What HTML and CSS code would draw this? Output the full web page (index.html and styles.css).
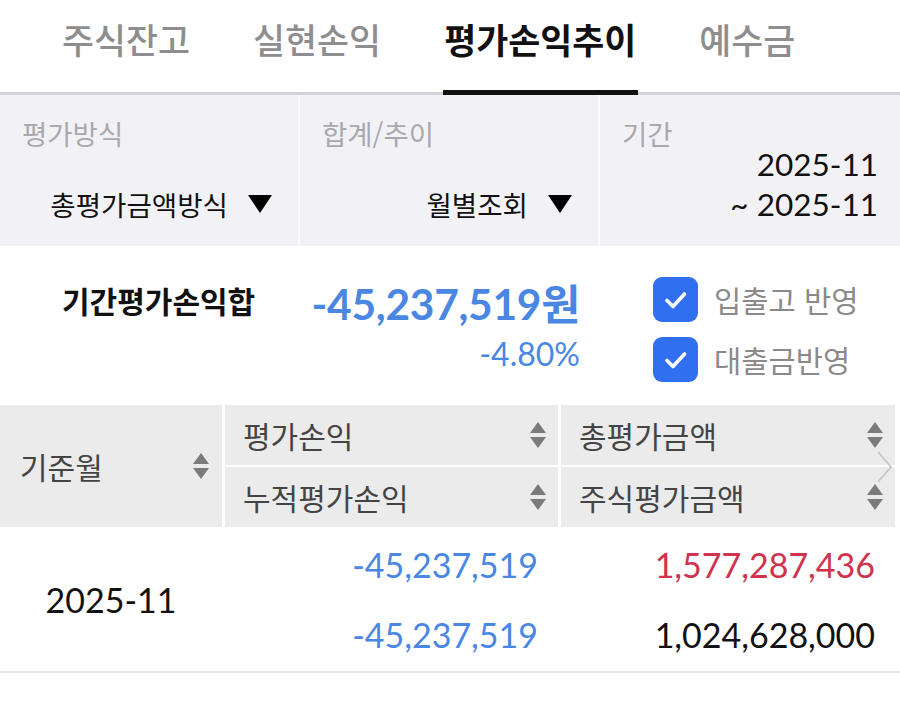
FILE: index.html
```html
<!DOCTYPE html>
<html lang="ko">
<head>
<meta charset="utf-8">
<title>평가손익추이</title>
<link rel="stylesheet" href="styles.css">
</head>
<body>
<div class="page">
  <nav class="tabs">
    <div class="tab">주식잔고</div>
    <div class="tab">실현손익</div>
    <div class="tab active">평가손익추이</div>
    <div class="tab">예수금</div>
  </nav>

  <section class="filters">
    <div class="fcol">
      <div class="flabel">평가방식</div>
      <div class="fvalue">총평가금액방식 <svg class="caret" width="24" height="18" viewBox="0 0 24 18"><path d="M0 0 H24 L12 18 Z" fill="#000"/></svg></div>
    </div>
    <div class="fcol">
      <div class="flabel">합계/추이</div>
      <div class="fvalue">월별조회 <svg class="caret" width="24" height="18" viewBox="0 0 24 18"><path d="M0 0 H24 L12 18 Z" fill="#000"/></svg></div>
    </div>
    <div class="fcol period">
      <div class="flabel">기간</div>
      <div class="pvalues">
        <div class="pline num">2025-11</div>
        <div class="pline num">~ 2025-11</div>
      </div>
    </div>
  </section>

  <section class="summary">
    <div class="sum-label">기간평가손익합</div>
    <div class="sum-values">
      <div class="sum-amount"><span class="num">-45,237,519</span>원</div>
      <div class="sum-rate num">-4.80%</div>
    </div>
    <div class="checks">
      <label class="check"><span class="box"><svg width="45" height="45" viewBox="0 0 45 45"><path d="M14 23.5 L20 29.5 L31.5 17" fill="none" stroke="#fff" stroke-width="3.6" stroke-linecap="round" stroke-linejoin="round"/></svg></span><span class="check-text">입출고 반영</span></label>
      <label class="check"><span class="box"><svg width="45" height="45" viewBox="0 0 45 45"><path d="M14 23.5 L20 29.5 L31.5 17" fill="none" stroke="#fff" stroke-width="3.6" stroke-linecap="round" stroke-linejoin="round"/></svg></span><span class="check-text">대출금반영</span></label>
    </div>
  </section>

  <section class="grid">
    <div class="thead">
      <div class="th th-month">
        <span>기준월</span>
        <svg class="sort" width="18" height="28" viewBox="0 0 18 28"><path d="M9 1 L17 12 H1 Z M1 16 H17 L9 27 Z" fill="#7b7b7b"/></svg>
      </div>
      <div class="th">
        <span>평가손익</span>
        <svg class="sort" width="18" height="28" viewBox="0 0 18 28"><path d="M9 1 L17 12 H1 Z M1 16 H17 L9 27 Z" fill="#7b7b7b"/></svg>
      </div>
      <div class="th">
        <span>총평가금액</span>
        <svg class="sort" width="18" height="28" viewBox="0 0 18 28"><path d="M9 1 L17 12 H1 Z M1 16 H17 L9 27 Z" fill="#7b7b7b"/></svg>
      </div>
      <div class="th">
        <span>누적평가손익</span>
        <svg class="sort" width="18" height="28" viewBox="0 0 18 28"><path d="M9 1 L17 12 H1 Z M1 16 H17 L9 27 Z" fill="#7b7b7b"/></svg>
      </div>
      <div class="th">
        <span>주식평가금액</span>
        <svg class="sort" width="18" height="28" viewBox="0 0 18 28"><path d="M9 1 L17 12 H1 Z M1 16 H17 L9 27 Z" fill="#7b7b7b"/></svg>
      </div>
      <svg class="chevron" width="16" height="32" viewBox="0 0 16 32"><path d="M1 1 L14 16 L1 31" fill="none" stroke="#c4c4c4" stroke-width="1.6"/></svg>
    </div>
    <div class="tbody">
      <div class="td td-month num">2025-11</div>
      <div class="td num blue">-45,237,519</div>
      <div class="td num red">1,577,287,436</div>
      <div class="td num blue">-45,237,519</div>
      <div class="td num">1,024,628,000</div>
    </div>
  </section>
</div>
</body>
</html>
```

FILE: styles.css
```css
* { box-sizing: border-box; }

html, body {
  margin: 0;
  padding: 0;
  background: #fff;
}

body {
  font-family: "Noto Sans CJK KR", "Noto Sans", sans-serif;
  color: #111;
  width: 900px;
  height: 704px;
  overflow: hidden;
}

.num {
  font-family: "Lato", "Noto Sans CJK KR", sans-serif;
}

/* Tabs */
.tabs {
  display: flex;
  gap: 63px;
  padding-left: 62px;
  height: 95px;
  border-bottom: 3px solid #d2d2d7;
}

.tab {
  position: relative;
  font-size: 34.8px;
  line-height: 78px;
  color: #8e8e8e;
  font-weight: 500;
  white-space: nowrap;
}

.tab.active {
  color: #111;
  font-weight: 700;
}

.tab.active::after {
  content: "";
  position: absolute;
  left: -1px;
  right: -2px;
  bottom: -3px;
  height: 5px;
  background: #111;
}

/* Filters */
.filters {
  display: grid;
  grid-template-columns: 298px 298px 1fr;
  column-gap: 2px;
  height: 151px;
  background: #fbfbfc;
}

.fcol {
  background: #f2f2f6;
  padding: 22px 26px 0 22px;
  display: flex;
  flex-direction: column;
}

.flabel {
  font-size: 27.5px;
  line-height: 32px;
  color: #a9a9ad;
  white-space: nowrap;
}

.fvalue {
  margin-top: 37px;
  font-size: 27.6px;
  line-height: 36px;
  color: #111;
  display: flex;
  align-items: center;
  justify-content: flex-end;
  gap: 20px;
  white-space: nowrap;
}

.caret {
  display: block;
  flex: none;
}

.period {
  padding-right: 22px;
}

.pvalues {
  display: flex;
  flex-direction: column;
  align-items: flex-end;
  gap: 4px;
  margin-top: -3px;
}

.pline {
  font-size: 31.5px;
  line-height: 36px;
  color: #111;
  white-space: nowrap;
}

/* Summary */
.summary {
  display: flex;
  height: 159px;
  padding-left: 62px;
}

.sum-label {
  width: 192px;
  margin-top: 31px;
  font-size: 30px;
  line-height: 46px;
  font-weight: 700;
  white-space: nowrap;
}

.sum-values {
  width: 326px;
  margin-top: 33px;
  text-align: right;
  color: #4a87e2;
}

.sum-amount {
  font-size: 42.5px;
  line-height: 46px;
  font-weight: 700;
  letter-spacing: -0.3px;
  white-space: nowrap;
}

.sum-amount .num {
  font-weight: 700;
}

.sum-rate {
  margin-top: 9px;
  font-size: 32px;
  line-height: 36px;
  color: #4a87e2;
}

.checks {
  margin-left: 73px;
  padding-top: 31px;
  display: flex;
  flex-direction: column;
  gap: 15px;
}

.check {
  display: flex;
  align-items: center;
  gap: 16px;
  height: 45px;
}

.box {
  width: 45px;
  height: 45px;
  border-radius: 9px;
  background: #2f6ff0;
  display: block;
  flex: none;
}

.box svg {
  display: block;
}

.check-text {
  font-size: 29.6px;
  line-height: 45px;
  color: #8a8a8a;
  white-space: nowrap;
}

/* Grid */
.grid {
  width: 900px;
}

.thead {
  position: relative;
  display: grid;
  grid-template-columns: 222px 333px 334px;
  grid-template-rows: 60px 60px;
  column-gap: 3px;
  row-gap: 2px;
  width: 895px;
  background: #fff;
}

.th {
  background: #ebebeb;
  display: flex;
  align-items: center;
  justify-content: space-between;
  padding: 0 11px 0 18px;
  font-size: 30px;
  color: #444;
  white-space: nowrap;
}

.th-month {
  grid-row: 1 / span 2;
  padding: 0 12px 0 20px;
}

.sort {
  display: block;
  flex: none;
}

.chevron {
  position: absolute;
  right: 2px;
  top: 46px;
}

.tbody {
  display: grid;
  grid-template-columns: 222px 333px 334px;
  grid-template-rows: 70px 70px;
  column-gap: 3px;
  width: 900px;
  height: 146px;
  padding-top: 2px;
  padding-right: 5px;
  border-bottom: 2px solid #e6e6e6;
}

.td {
  display: flex;
  align-items: center;
  justify-content: flex-end;
  padding-right: 20px;
  font-size: 34px;
  color: #111;
  white-space: nowrap;
}

.td-month {
  grid-row: 1 / span 2;
  justify-content: center;
  padding-right: 0;
}

.blue { color: #4a87e2; }
.red { color: #cf334e; }
```
